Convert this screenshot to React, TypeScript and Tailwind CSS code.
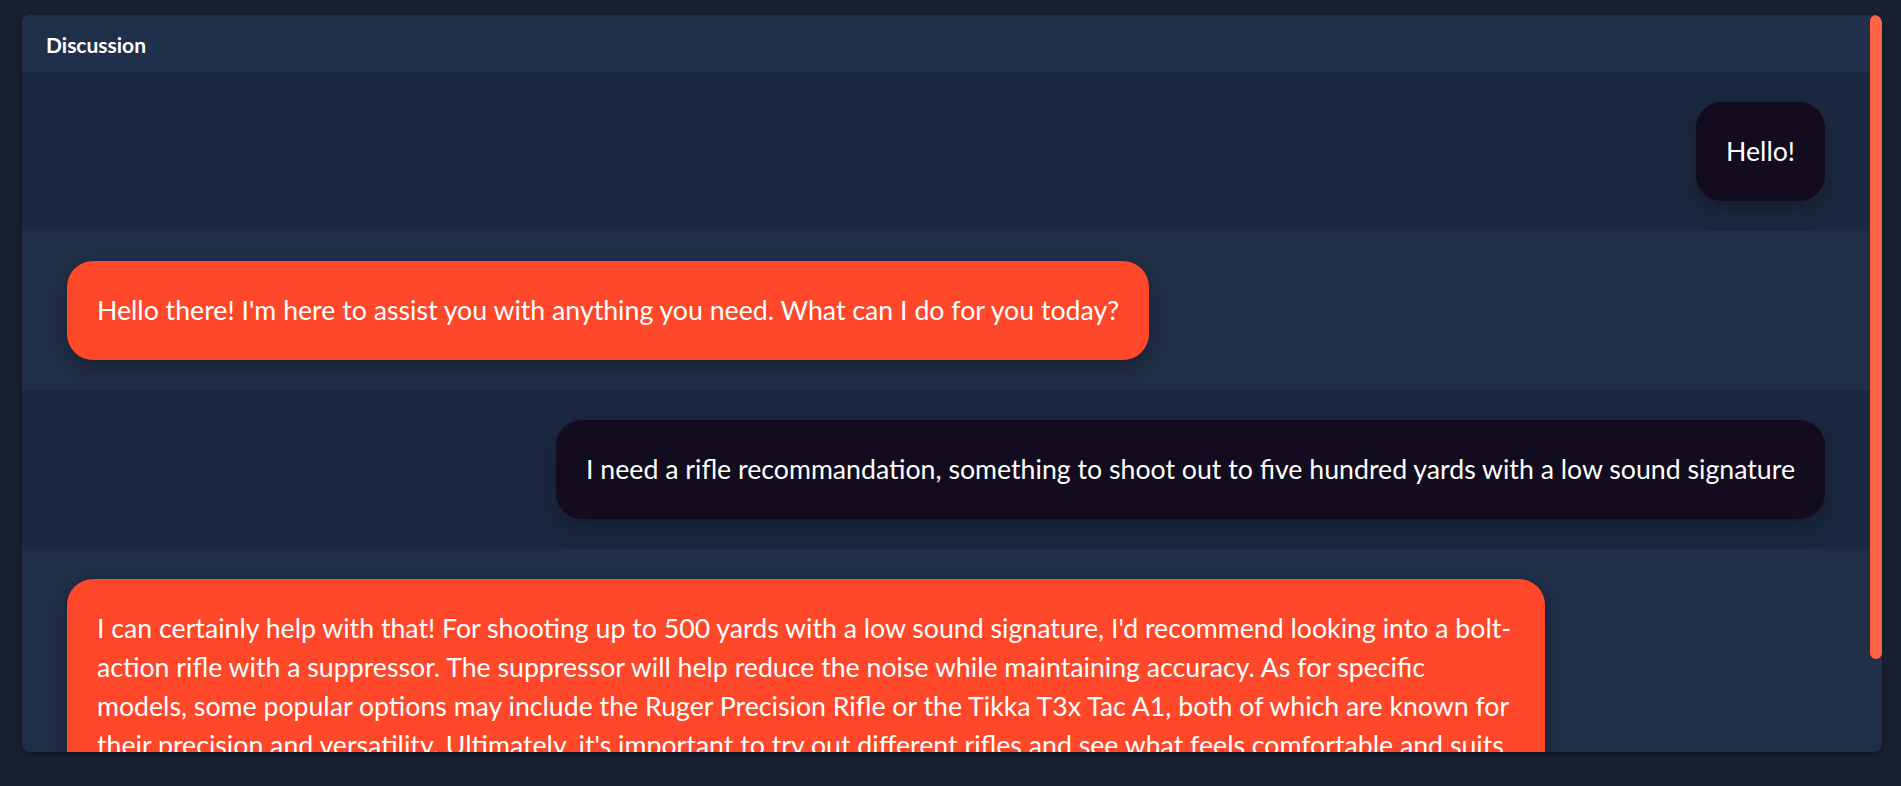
const messages = [
  { role: "user", text: "Hello!" },
  {
    role: "assistant",
    text: "Hello there! I'm here to assist you with anything you need. What can I do for you today?",
  },
  {
    role: "user",
    text: "I need a rifle recommandation, something to shoot out to five hundred yards with a low sound signature",
  },
  {
    role: "assistant",
    text: "I can certainly help with that! For shooting up to 500 yards with a low sound signature, I'd recommend looking into a bolt-action rifle with a suppressor. The suppressor will help reduce the noise while maintaining accuracy. As for specific models, some popular options may include the Ruger Precision Rifle or the Tikka T3x Tac A1, both of which are known for their precision and versatility. Ultimately, it's important to try out different rifles and see what feels comfortable and suits your needs and preferences best.",
  },
];

const Bubble = ({ role, text }: { role: string; text: string }) => {
  const isUser = role === "user";
  return (
    <div
      className={`flex px-[45px] py-[30px] ${
        isUser ? "justify-end bg-[#1b283f]" : "justify-start bg-[#202e47]"
      }`}
    >
      <div
        className={`max-w-[1478px] rounded-[26px] p-[30px] text-[26.7px] leading-[39px] text-white shadow-[0_8px_22px_rgba(0,0,0,0.28)] ${
          isUser ? "bg-[#130b1e]" : "bg-[#ff472a]"
        }`}
      >
        {text}
      </div>
    </div>
  );
};

export default function App() {
  return (
    <div className="min-h-screen bg-[#182131] pt-[15px] pl-[22px] pr-[19px] font-['Lato',sans-serif]">
      <div className="flex h-[737px] overflow-hidden rounded-lg bg-[#202e47] shadow-[0_3px_6px_rgba(0,0,0,0.35)]">
        <div className="flex min-w-0 flex-1 flex-col">
          {/* header */}
          <div className="flex h-[57px] shrink-0 items-center bg-[#21304a] px-[24px] pt-[2px] text-[21px] font-bold text-white">
            Discussion
          </div>
          {messages.map((m, i) => (
            <Bubble key={i} role={m.role} text={m.text} />
          ))}
        </div>
        {/* scrollbar */}
        <div className="flex w-[12px] shrink-0 flex-col">
          <div className="h-[644px] rounded-full bg-[#ff6347]" />
        </div>
      </div>
    </div>
  );
}
